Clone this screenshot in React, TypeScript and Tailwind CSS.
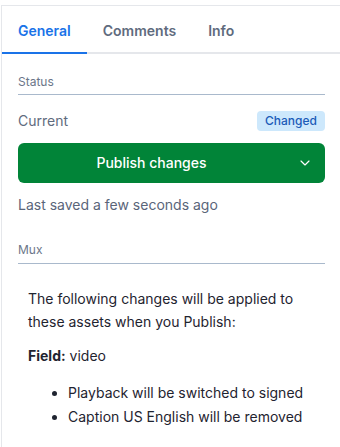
import { ChevronDown } from "lucide-react";

export default function App() {
  return (
    <div className="w-[340px] h-[447px] bg-white overflow-hidden pt-[5px] font-['Inter',sans-serif]">
      <div className="h-full border-t border-l border-[#e5e7eb] ml-px">
        {/* tabs */}
        <div className="flex h-12 border-b-2 border-[#e5e7eb] text-sm font-semibold">
          <button className="px-4 pt-[3px] -mb-[2px] border-b-2 border-[#1a73e8] text-[#1a73e8]">General</button>
          <button className="px-4 pt-[3px] text-[#5f6b7e]">Comments</button>
          <button className="px-4 pt-[3px] text-[#5f6b7e]">Info</button>
        </div>

        <div className="pl-4 pr-[15px] pt-[20px]">
          <div className="text-xs leading-4 text-[#6b7689] pb-[4px] border-b border-[#a9b9cc]">Status</div>

          <div className="mt-4 flex items-center justify-between h-5">
            <span className="text-sm text-[#5f6b7e]">Current</span>
            <span className="h-5 px-2 rounded-[4px] bg-[#cde8fc] text-[#1b5bb8] text-xs font-medium leading-5">Changed</span>
          </div>

          <div className="mt-3 flex h-10 rounded-md bg-[#018438] text-white">
            <div className="flex-1 flex items-center justify-center text-sm font-medium">Publish changes</div>
            <div className="w-10 flex items-center justify-center">
              <ChevronDown size={16} strokeWidth={1.75} />
            </div>
          </div>

          <div className="mt-3 text-sm leading-5 text-[#5a6579]">Last saved a few seconds ago</div>

          <div className="mt-[27px] text-xs leading-4 text-[#6b7689] pb-[5px] border-b border-[#a9b9cc]">Mux</div>

          <div className="px-[10px] pt-[23px] text-sm text-[#1f2430] leading-[23px]">
            <p>The following changes will be applied to these assets when you Publish:</p>
            <p className="mt-[11px]">
              <span className="font-bold">Field:</span> video
            </p>
            <ul className="mt-[14px] pl-10 list-disc">
              <li className="leading-[24px]">Playback will be switched to signed</li>
              <li className="leading-[24px]">Caption US English will be removed</li>
            </ul>
          </div>
        </div>
      </div>
    </div>
  );
}
